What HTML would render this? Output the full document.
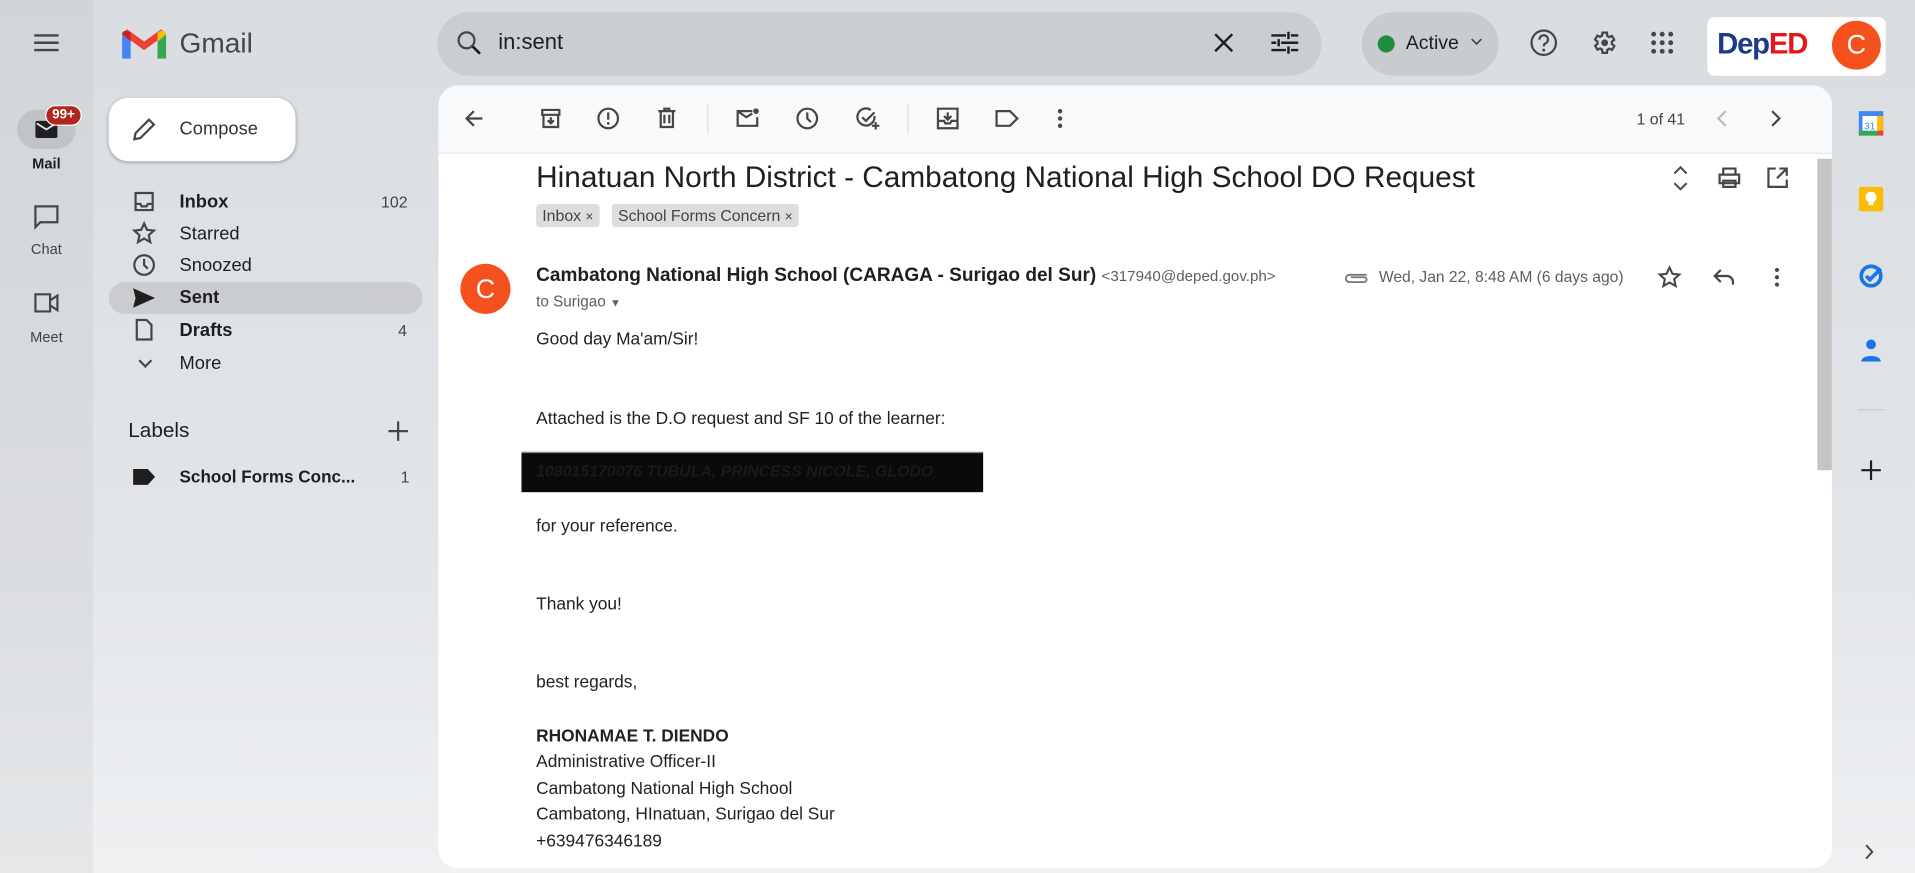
<!DOCTYPE html>
<html><head><meta charset="utf-8">
<style>
*{box-sizing:border-box;margin:0;padding:0}
html,body{width:1915px;height:873px;overflow:hidden;background:#dde1e5}
#w{position:absolute;left:0;top:0;width:1568px;height:715px;transform:scale(1.22130);transform-origin:0 0;font-family:"Liberation Sans",Arial,sans-serif;color:#1f1f1f;background:linear-gradient(180deg,#d9dde1 0%,#e2e5e8 60%,#eef0f2 100%)}
.a{position:absolute}
.rail{left:0;top:0;width:76px;height:715px;background:rgba(0,0,0,0.035)}
svg{position:absolute;overflow:visible}
.nav{font-size:15px;color:#1f1f1f}
.ic{fill:none;stroke:#444746;stroke-width:1.8}
.t{font-size:14.2px;color:#222;left:439px}
</style></head><body><div id="w">
<div class="a rail"></div>
<svg style="left:28px;top:27px" width="20" height="16"><path d="M0 2h20M0 8h20M0 14h20" stroke="#444746" stroke-width="2"/></svg>
<svg style="left:100px;top:24px" width="36" height="26" viewBox="0 0 36 26">
<path d="M0 4v20h7V10z" fill="#4285f4"/><path d="M29 10v14h7V4z" fill="#34a853"/>
<path d="M0 4l18 13 18-13-4-4-14 10L4 0z" fill="#ea4335"/><path d="M29 3v7l7-6c0-3-4-4-7-1z" fill="#fbbc04"/><path d="M0 4l7 6V3C4 0 0 1 0 4z" fill="#c5221f"/></svg>
<div class="a" style="left:147px;top:22px;font-size:23px;color:#444746">Gmail</div>
<div class="a" style="left:358px;top:10px;width:724px;height:52px;border-radius:26px;background:rgba(0,0,0,0.07)"></div>
<svg style="left:374px;top:25px" width="20" height="20"><circle cx="8" cy="8" r="6.5" class="ic" stroke="#1f1f1f" stroke-width="2"/><path d="M13 13l6 6" stroke="#1f1f1f" stroke-width="2.2"/></svg>
<div class="a" style="left:408px;top:24px;font-size:18px">in:sent</div>
<svg style="left:994px;top:27px" width="16" height="16"><path d="M1 1l14 14M15 1L1 15" stroke="#1f1f1f" stroke-width="2"/></svg>
<svg style="left:1041px;top:25px" width="22" height="20"><path d="M0 4h12M16 4h6M0 10h4M8 10h14M0 16h12M16 16h6M14 1v6M6 7v6M14 13v6" stroke="#1f1f1f" stroke-width="2"/></svg>
<div class="a" style="left:1115px;top:10px;width:112px;height:52px;border-radius:26px;background:rgba(0,0,0,0.08)"></div>
<div class="a" style="left:1128px;top:29px;width:14px;height:14px;border-radius:50%;background:#1e8e3e"></div>
<div class="a" style="left:1151px;top:27px;font-size:16px">Active</div>
<svg style="left:1204px;top:31px" width="10" height="6"><path d="M1 1l4 4 4-4" fill="none" stroke="#444" stroke-width="1.3"/></svg>
<svg style="left:1253px;top:24px" width="22" height="22"><circle cx="11" cy="11" r="10" class="ic"/><path d="M7.5 8.5a3.5 3.5 0 1 1 5 3c-1.2.7-1.5 1.3-1.5 2.5" class="ic"/><circle cx="11" cy="17" r="1.2" fill="#444746"/></svg>
<svg style="left:1302px;top:24px" width="22" height="22" viewBox="0 0 24 24"><path d="M19.4 13a7.5 7.5 0 0 0 0-2l2.1-1.6-2-3.5-2.5 1a7 7 0 0 0-1.7-1L15 3h-4l-.4 2.7a7 7 0 0 0-1.7 1l-2.5-1-2 3.5L6.6 11a7.5 7.5 0 0 0 0 2l-2.1 1.6 2 3.5 2.5-1a7 7 0 0 0 1.7 1L11 21h4l.4-2.7a7 7 0 0 0 1.7-1l2.5 1 2-3.5z" fill="none" stroke="#444746" stroke-width="2"/><circle cx="13" cy="12" r="3" fill="#444746"/></svg>
<svg style="left:1352px;top:26px" width="18" height="18"><g fill="#444746"><circle cx="2" cy="2" r="2"/><circle cx="9" cy="2" r="2"/><circle cx="16" cy="2" r="2"/><circle cx="2" cy="9" r="2"/><circle cx="9" cy="9" r="2"/><circle cx="16" cy="9" r="2"/><circle cx="2" cy="16" r="2"/><circle cx="9" cy="16" r="2"/><circle cx="16" cy="16" r="2"/></g></svg>
<div class="a" style="left:1398px;top:14px;width:146px;height:48px;border-radius:6px;background:#fff"></div>
<div class="a" style="left:1406px;top:23px;font-size:24px;font-weight:bold;letter-spacing:-1px"><span style="color:#1d3a8a">De</span><span style="color:#1d3a8a">p</span><span style="color:#e3161b">ED</span></div>
<div class="a" style="left:1500px;top:17px;width:40px;height:40px;border-radius:50%;background:#f4511e;color:#fff;font-size:22px;text-align:center;line-height:40px">C</div>
<div class="a" style="left:14px;top:90px;width:48px;height:32px;border-radius:16px;background:rgba(0,0,0,0.09)"></div>
<svg style="left:29px;top:99px" width="18" height="14"><rect width="18" height="14" rx="1.5" fill="#1f1f1f"/><path d="M1 2l8 5 8-5" fill="none" stroke="#dfe2e6" stroke-width="1.5"/></svg>
<div class="a" style="left:37px;top:86px;width:30px;height:17px;border-radius:9px;background:#b3261e;border:1.5px solid #fff;color:#fff;font-size:11px;font-weight:bold;text-align:center;line-height:14px">99+</div>
<div class="a" style="left:0;top:127px;width:76px;text-align:center;font-size:12px;font-weight:bold">Mail</div>
<svg style="left:28px;top:168px" width="20" height="20"><path d="M1 1h18v13H5l-4 4z" class="ic"/></svg>
<div class="a" style="left:0;top:197px;width:76px;text-align:center;font-size:12px;color:#444">Chat</div>
<svg style="left:28px;top:240px" width="20" height="16"><path d="M1 1h12v14H1zM13 6l6-4v12l-6-4" class="ic"/></svg>
<div class="a" style="left:0;top:269px;width:76px;text-align:center;font-size:12px;color:#444">Meet</div>
<div class="a" style="left:89px;top:80px;width:153px;height:52px;border-radius:16px;background:#fff;box-shadow:0 1px 3px rgba(0,0,0,0.3)"></div>
<svg style="left:108px;top:96px" width="20" height="20"><path d="M2 18l1-5L14 2l4 4L7 17z" class="ic" stroke="#1f1f1f"/></svg>
<div class="a" style="left:147px;top:97px;font-size:15px;color:#333">Compose</div>
<div class="a" style="left:89px;top:231px;width:257px;height:26px;border-radius:13px;background:rgba(0,0,0,0.09)"></div>
<svg style="left:110px;top:157px" width="16" height="16"><path d="M1 1h14v14H1zM1 10h4l1 2h4l1-2h4" class="ic"/></svg>
<div class="a nav" style="left:147px;top:157px;font-weight:bold">Inbox</div><div class="a" style="left:312px;top:158px;font-size:13px;color:#444">102</div>
<svg style="left:109px;top:182px" width="18" height="18"><path d="M9 1l2.4 5.2 5.6.6-4.2 3.8 1.2 5.6L9 13.3 4 16.2l1.2-5.6L1 6.8l5.6-.6z" class="ic" stroke-width="1.5"/></svg>
<div class="a nav" style="left:147px;top:183px">Starred</div>
<svg style="left:109px;top:208px" width="18" height="18"><circle cx="9" cy="9" r="8" class="ic"/><path d="M9 4v5l3 3" class="ic"/></svg>
<div class="a nav" style="left:147px;top:209px">Snoozed</div>
<svg style="left:109px;top:236px" width="18" height="16"><path d="M0 0l18 8-18 8 2-8z" fill="#1f1f1f"/></svg>
<div class="a nav" style="left:147px;top:235px;font-weight:bold">Sent</div>
<svg style="left:111px;top:261px" width="14" height="18"><path d="M1 1h8l4 4v12H1z" class="ic"/></svg>
<div class="a nav" style="left:147px;top:262px;font-weight:bold">Drafts</div><div class="a" style="left:326px;top:263px;font-size:13px;color:#444">4</div>
<svg style="left:113px;top:294px" width="12" height="8"><path d="M1 1l5 5 5-5" class="ic" stroke-width="1.5"/></svg>
<div class="a nav" style="left:147px;top:289px">More</div>
<div class="a" style="left:105px;top:343px;font-size:17px">Labels</div>
<svg style="left:318px;top:345px" width="16" height="16"><path d="M8 0v16M0 8h16" stroke="#444746" stroke-width="1.8"/></svg>
<svg style="left:109px;top:384px" width="18" height="13"><path d="M0 0h12l6 6.5-6 6.5H0z" fill="#1f1f1f"/></svg>
<div class="a nav" style="left:147px;top:382px;font-weight:bold;font-size:14px">School Forms Conc...</div><div class="a" style="left:328px;top:383px;font-size:13px;color:#444">1</div>
<div class="a" style="left:359px;top:70px;width:1141px;height:641px;border-radius:16px;background:#fff;overflow:hidden">
 <div class="a" style="left:0;top:0;width:1141px;height:56px;background:#f8f9fa;border-bottom:1px solid #e6e8ea"></div>
 <div class="a" style="left:1129px;top:60px;width:12px;height:255px;background:#c4c4c4"></div>
</div>
<svg style="left:380px;top:89px" width="16" height="16"><path d="M15 8H2M8 2L2 8l6 6" class="ic"/></svg>
<svg style="left:443px;top:89px" width="16" height="16"><path d="M1 1h14v4H1zM2 5v10h12V5M8 7v5M5.5 9.5L8 12l2.5-2.5" class="ic" stroke-width="1.6"/></svg>
<svg style="left:489px;top:88px" width="18" height="18"><circle cx="9" cy="9" r="8" class="ic"/><path d="M9 4v6" class="ic" stroke-width="2"/><circle cx="9" cy="13" r="1.1" fill="#444746"/></svg>
<svg style="left:539px;top:88px" width="14" height="17"><path d="M0 3h14M5 3V1h4v2M2 3v13h10V3M5 6v7M9 6v7" class="ic" stroke-width="1.6"/></svg>
<div class="a" style="left:579px;top:85px;width:1px;height:24px;background:#ddd"></div>
<svg style="left:603px;top:88px" width="19" height="17"><path d="M13 3H1v12h16V8M1 3l7 5 5-3" class="ic" stroke-width="1.6"/><circle cx="16" cy="3" r="2.3" fill="#444746"/></svg>
<svg style="left:652px;top:88px" width="18" height="18"><circle cx="9" cy="9" r="8" class="ic"/><path d="M9 4v5l3 3" class="ic"/></svg>
<svg style="left:701px;top:88px" width="20" height="18"><path d="M15 7a7 7 0 1 1-3-5M5 8l3 3 7-7M16 12v6M13 15h6" class="ic" stroke-width="1.6"/></svg>
<div class="a" style="left:743px;top:85px;width:1px;height:24px;background:#ddd"></div>
<svg style="left:767px;top:88px" width="18" height="18"><path d="M1 1h16v16H1zM1 11h5l1 2h4l1-2h5M9 4v6M6 7l3 3 3-3" class="ic" stroke-width="1.6"/></svg>
<svg style="left:815px;top:90px" width="19" height="14"><path d="M1 1h11l6 6-6 6H1z" class="ic" stroke-width="1.6"/></svg>
<svg style="left:866px;top:89px" width="4" height="16"><circle cx="2" cy="2" r="1.8" fill="#444746"/><circle cx="2" cy="8" r="1.8" fill="#444746"/><circle cx="2" cy="14" r="1.8" fill="#444746"/></svg>
<div class="a" style="left:1340px;top:90px;font-size:13px;color:#444">1 of 41</div>
<svg style="left:1406px;top:90px" width="8" height="14"><path d="M7 1L1 7l6 6" fill="none" stroke="#bbb" stroke-width="1.8"/></svg>
<svg style="left:1450px;top:90px" width="8" height="14"><path d="M1 1l6 6-6 6" fill="none" stroke="#444746" stroke-width="1.8"/></svg>
<div class="a" style="left:439px;top:132px;font-size:24.4px;color:#1f1f1f;white-space:nowrap">Hinatuan North District - Cambatong National High School DO Request</div>
<svg style="left:1370px;top:136px" width="12" height="20"><path d="M1 6l5-5 5 5M1 14l5 5 5-5" fill="none" stroke="#444746" stroke-width="1.6"/></svg>
<svg style="left:1407px;top:137px" width="18" height="17"><path d="M4 6V1h10v5M1 6h16v7H1zM4 11h10v5H4z" fill="none" stroke="#444746" stroke-width="1.8"/></svg>
<svg style="left:1447px;top:137px" width="17" height="17"><path d="M7 1H1v15h15v-6M10 1h6v6M16 1L8 9" fill="none" stroke="#444746" stroke-width="1.8"/></svg>
<div class="a" style="left:439px;top:167px;height:19px;padding:0 5px;background:#dddddd;border-radius:3px;font-size:13px;color:#444;line-height:19px">Inbox <span style="font-size:11px">×</span></div>
<div class="a" style="left:501px;top:167px;height:19px;padding:0 5px;background:#dddddd;border-radius:3px;font-size:13px;color:#444;line-height:19px">School Forms Concern <span style="font-size:11px">×</span></div>
<div class="a" style="left:377px;top:216px;width:41px;height:41px;border-radius:50%;background:#f4511e;color:#fff;font-size:22px;text-align:center;line-height:41px">C</div>
<div class="a" style="left:439px;top:217px;font-size:15.6px;font-weight:bold;color:#1f1f1f;white-space:nowrap">Cambatong National High School (CARAGA - Surigao del Sur) <span style="font-weight:normal;font-size:12.4px;color:#5e5e5e">&lt;317940@deped.gov.ph&gt;</span></div>
<div class="a" style="left:439px;top:240px;font-size:12.5px;color:#5e5e5e">to Surigao <span style="font-size:9px">▼</span></div>
<svg style="left:1100px;top:221px" width="20" height="10"><path d="M19 4H5a3 3 0 0 0 0 6h12a2 2 0 0 0 0-4H6" fill="none" stroke="#777" stroke-width="1.5"/></svg>
<div class="a" style="left:1129px;top:219px;font-size:12.8px;color:#5e5e5e">Wed, Jan 22, 8:48 AM (6 days ago)</div>
<svg style="left:1358px;top:218px" width="18" height="18"><path d="M9 1l2.4 5.2 5.6.6-4.2 3.8 1.2 5.6L9 13.3 4 16.2l1.2-5.6L1 6.8l5.6-.6z" fill="none" stroke="#444746" stroke-width="1.7"/></svg>
<svg style="left:1403px;top:220px" width="17" height="13"><path d="M6 1L1 6l5 5M1 6h10a5 5 0 0 1 5 5v2" fill="none" stroke="#444746" stroke-width="1.8"/></svg>
<svg style="left:1453px;top:219px" width="4" height="16"><circle cx="2" cy="2" r="1.7" fill="#444746"/><circle cx="2" cy="8" r="1.7" fill="#444746"/><circle cx="2" cy="14" r="1.7" fill="#444746"/></svg>
<div class="a t" style="top:270px">Good day Ma'am/Sir!</div>
<div class="a t" style="top:335px">Attached is the D.O request and SF 10 of the learner:</div>
<div class="a" style="left:427px;top:370px;width:378px;height:33px;background:#0a0a0a;border-top:1px solid #888"></div>
<div class="a" style="left:439px;top:378px;font-size:13px;font-weight:bold;font-style:italic;color:#1a1a1a">108015170076 TUBULA, PRINCESS NICOLE, GLODO</div>
<div class="a t" style="top:423px">for your reference.</div>
<div class="a t" style="top:487px">Thank you!</div>
<div class="a t" style="top:551px">best regards,</div>
<div class="a t" style="top:595px;font-weight:bold">RHONAMAE T. DIENDO</div>
<div class="a t" style="top:616px">Administrative Officer-II</div>
<div class="a t" style="top:638px">Cambatong National High School</div>
<div class="a t" style="top:659px">Cambatong, HInatuan, Surigao del Sur</div>
<div class="a t" style="top:681px">+639476346189</div>
<svg style="left:1522px;top:91px" width="20" height="20"><rect x="0" y="0" width="20" height="20" fill="#4285f4"/><rect x="3" y="4" width="14" height="13" fill="#fff"/><rect x="15" y="4" width="5" height="12" fill="#fbbc04"/><rect x="0" y="16" width="15" height="4" fill="#34a853"/><rect x="15" y="16" width="5" height="4" fill="#ea4335"/><text x="4.5" y="15" font-size="8" fill="#4285f4" font-family="Liberation Sans">31</text></svg>
<svg style="left:1522px;top:153px" width="20" height="20"><rect width="20" height="20" rx="2" fill="#fbbc04"/><circle cx="10" cy="8.5" r="4.5" fill="#fff"/><rect x="8" y="13" width="4" height="2" fill="#fff"/></svg>
<svg style="left:1522px;top:215px" width="20" height="20"><circle cx="10" cy="11" r="8" fill="none" stroke="#1a73e8" stroke-width="3"/><path d="M6 11l3 3 9-9" fill="none" stroke="#1a73e8" stroke-width="3"/></svg>
<svg style="left:1524px;top:277px" width="16" height="20"><circle cx="8" cy="5" r="4" fill="#1a73e8"/><path d="M0 19c0-6 16-6 16 0z" fill="#1a73e8"/></svg>
<div class="a" style="left:1521px;top:335px;width:22px;height:1px;background:#c8ccd0"></div>
<svg style="left:1524px;top:377px" width="16" height="16"><path d="M8 0v16M0 8h16" stroke="#1f1f1f" stroke-width="1.8"/></svg>
<svg style="left:1527px;top:691px" width="8" height="13"><path d="M1 1l5 5.5L1 12" fill="none" stroke="#444746" stroke-width="1.6"/></svg>
</div></body></html>
